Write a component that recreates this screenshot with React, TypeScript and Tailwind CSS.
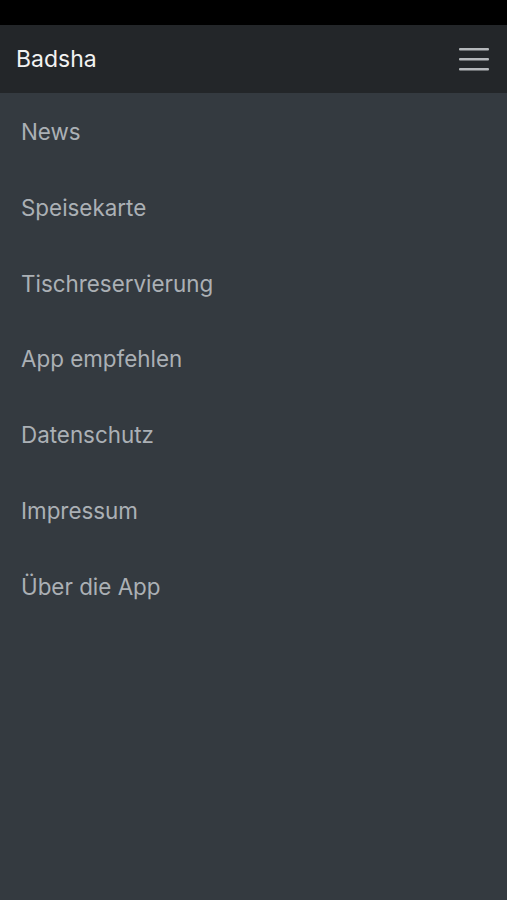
const items = [
  "News",
  "Speisekarte",
  "Tischreservierung",
  "App empfehlen",
  "Datenschutz",
  "Impressum",
  "Über die App",
];

export default function App() {
  return (
    <div
      className="flex h-[900px] w-full flex-col bg-[#343a40]"
      style={{ fontFamily: "Inter, 'Liberation Sans', sans-serif" }}
    >
      <div className="h-[25px] bg-black" />
      <header className="flex h-[68px] items-center justify-between bg-[#232629] pl-4 pr-[18px]">
        <span className="text-[23px] text-[#f2f2f2]">Badsha</span>
        <svg width="30" height="24" viewBox="0 0 30 24" className="text-[#b5b8bb]">
          <rect x="0" y="1" width="30" height="2.5" rx="1" fill="currentColor" />
          <rect x="0" y="11" width="30" height="2.5" rx="1" fill="currentColor" />
          <rect x="0" y="21" width="30" height="2.5" rx="1" fill="currentColor" />
        </svg>
      </header>
      <nav className="flex flex-col pt-px">
        {items.map((item) => (
          <a
            key={item}
            href="#"
            className="flex h-[75.8px] items-center px-[21px] text-[22.4px] text-[#abb0b5]"
          >
            {item}
          </a>
        ))}
      </nav>
    </div>
  );
}
